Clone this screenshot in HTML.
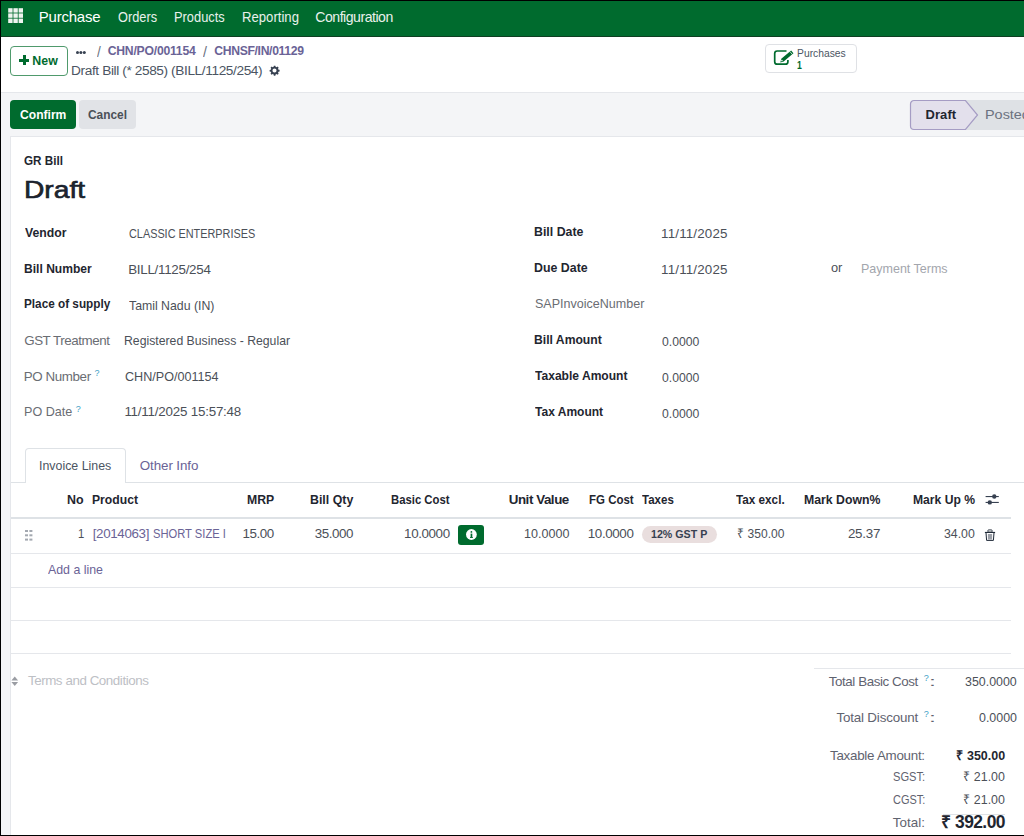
<!DOCTYPE html>
<html><head><meta charset="utf-8"><style>
html,body{margin:0;padding:0;width:1024px;height:836px;overflow:hidden;background:#fff;}
body{position:relative;font-family:"Liberation Sans",sans-serif;}
.a{position:absolute;}
.t{position:absolute;white-space:nowrap;line-height:20px;transform-origin:0 0;}
</style></head><body>
<!-- frame -->
<div class="a" style="left:0;top:0;width:1024px;height:836px;background:#f4f5f7;"></div>
<!-- navbar -->
<div class="a" style="left:0;top:0;width:1024px;height:36px;background:#006b2e;"></div>
<div class="a" style="left:0;top:36px;width:1024px;height:1px;background:#0e3f22;"></div>
<!-- grid icon -->
<svg class="a" style="left:0;top:0;" width="30" height="30" viewBox="0 0 30 30" fill="#eef4ef"><rect x="8.2" y="8.2" width="4.4" height="4.4"/><rect x="8.2" y="13.4" width="4.4" height="4.4"/><rect x="8.2" y="18.6" width="4.4" height="4.4"/><rect x="13.4" y="8.2" width="4.4" height="4.4"/><rect x="13.4" y="13.4" width="4.4" height="4.4"/><rect x="13.4" y="18.6" width="4.4" height="4.4"/><rect x="18.6" y="8.2" width="4.4" height="4.4"/><rect x="18.6" y="13.4" width="4.4" height="4.4"/><rect x="18.6" y="18.6" width="4.4" height="4.4"/></svg>
<!-- control panel -->
<div class="a" style="left:0;top:37px;width:1024px;height:55px;background:#ffffff;"></div>
<div class="a" style="left:0;top:92px;width:1024px;height:1px;background:#e5e7eb;"></div>
<!-- New button -->
<div class="a" style="left:10px;top:46px;width:56px;height:28px;border:1px solid #4f9a6c;border-radius:4px;background:#fff;"></div>
<div class="a" style="left:19px;top:58.5px;width:10px;height:3px;background:#006b2e;"></div>
<div class="a" style="left:22.5px;top:55px;width:3px;height:10px;background:#006b2e;"></div>
<!-- ellipsis -->
<div class="a" style="left:75.6px;top:51px;width:3px;height:3px;border-radius:50%;background:#374151;box-shadow:3.4px 0 0 #374151,6.8px 0 0 #374151;"></div>
<!-- gear -->
<svg class="a" style="left:268px;top:64px;" width="13" height="13" viewBox="0 0 24 24"><path fill="#374151" d="M12 8.2a3.8 3.8 0 1 0 0 7.6 3.8 3.8 0 0 0 0-7.6zm9.4 5.5-2.1.4a7.6 7.6 0 0 1-.8 1.9l1.2 1.8-2 2-1.8-1.2a7.6 7.6 0 0 1-1.9.8l-.4 2.1h-2.8l-.4-2.1a7.6 7.6 0 0 1-1.9-.8l-1.8 1.2-2-2 1.2-1.8a7.6 7.6 0 0 1-.8-1.9l-2.1-.4v-2.8l2.1-.4a7.6 7.6 0 0 1 .8-1.9L4.7 6.7l2-2 1.8 1.2a7.6 7.6 0 0 1 1.9-.8l.4-2.1h2.8l.4 2.1a7.6 7.6 0 0 1 1.9.8l1.8-1.2 2 2-1.2 1.8a7.6 7.6 0 0 1 .8 1.9l2.1.4z"/></svg>
<!-- smart button -->
<div class="a" style="left:765px;top:44px;width:90px;height:27px;border:1px solid #dfe1e5;border-radius:4px;background:#fff;"></div>
<svg class="a" style="left:766px;top:44px;" width="40" height="28" viewBox="766 44 40 28">
 <path d="M786.5 51H777.2A2.5 2.5 0 0 0 774.7 53.5V61.7A2.5 2.5 0 0 0 777.2 64.2H785.4A2.5 2.5 0 0 0 787.9 61.7V60" fill="none" stroke="#006b2e" stroke-width="1.7"/>
 <path d="M780.3 62.6L781.33 58.83L791.13 50.43L793.47 53.17L783.67 61.57Z" fill="#006b2e"/>
 <path d="M789.9 51.6L792.3 54.4" stroke="#fff" stroke-width="0.7"/>
 <circle cx="781.9" cy="60.6" r="0.8" fill="#fff"/>
</svg>
<!-- buttons -->
<div class="a" style="left:10px;top:100px;width:66px;height:29px;border-radius:4px;background:#006b2e;"></div>
<div class="a" style="left:79px;top:100px;width:57px;height:29px;border-radius:4px;background:#e1e3e7;"></div>
<!-- status bar -->
<div class="a" style="left:965px;top:100px;width:59px;height:30px;background:#dee1e5;"></div>
<svg class="a" style="left:909px;top:99px;" width="72" height="32" viewBox="0 0 72 32">
 <path d="M5 1.5H56.5L68.5 16L56.5 30.5H5A3.5 3.5 0 0 1 1.5 27V5A3.5 3.5 0 0 1 5 1.5Z" fill="#e3e0ec" stroke="#a59cc4" stroke-width="1.2"/>
</svg>
<!-- sheet -->
<div class="a" style="left:10px;top:136px;width:1014px;height:699px;background:#ffffff;border-left:1px solid #e5e7eb;border-top:1px solid #e5e7eb;"></div>
<!-- tabs -->
<div class="a" style="left:11px;top:482px;width:1013px;height:1px;background:#dee2e6;"></div>
<div class="a" style="left:25px;top:448px;width:99px;height:34px;border:1px solid #dee2e6;border-bottom:none;border-radius:4px 4px 0 0;background:#fff;"></div>
<!-- table lines -->
<div class="a" style="left:11px;top:517px;width:1000px;height:2px;background:#dee2e6;"></div>
<div class="a" style="left:11px;top:553px;width:1000px;height:1px;background:#e5e7eb;"></div>
<div class="a" style="left:11px;top:587px;width:1000px;height:1px;background:#e5e7eb;"></div>
<div class="a" style="left:11px;top:620px;width:1000px;height:1px;background:#e5e7eb;"></div>
<div class="a" style="left:11px;top:653px;width:1000px;height:1px;background:#e5e7eb;"></div>
<!-- settings icon -->
<svg class="a" style="left:978px;top:488px;" width="28" height="20" viewBox="978 488 28 20">
 <rect x="985.6" y="496" width="13.2" height="1.1" fill="#374151"/><rect x="985.6" y="501.9" width="13.2" height="1.1" fill="#374151"/>
 <circle cx="994.3" cy="496.5" r="2.2" fill="#374151"/><circle cx="989.8" cy="502.4" r="2.2" fill="#374151"/>
</svg>
<!-- drag handle -->
<div class="a" style="left:25px;top:529.5px;width:2.6px;height:2.6px;background:#a3a8b0;box-shadow:4.4px 0 0 #a3a8b0,0 4.3px 0 #a3a8b0,4.4px 4.3px 0 #a3a8b0,0 8.6px 0 #a3a8b0,4.4px 8.6px 0 #a3a8b0;"></div>
<!-- info button -->
<div class="a" style="left:458px;top:525px;width:26px;height:20px;border-radius:3px;background:#006b2e;"></div>
<svg class="a" style="left:465px;top:529px;" width="12" height="12" viewBox="0 0 12 12">
 <circle cx="6.4" cy="5.5" r="5.4" fill="#fff"/><rect x="5.6" y="4.6" width="1.7" height="4" fill="#006b2e"/><rect x="5.0" y="8" width="2.9" height="0.9" fill="#006b2e"/><circle cx="6.4" cy="2.9" r="0.9" fill="#006b2e"/>
</svg>
<!-- badge -->
<div class="a" style="left:641.5px;top:526px;width:75px;height:17px;border-radius:9px;background:#e9dede;"></div>
<!-- trash -->
<svg class="a" style="left:984px;top:529px;" width="12" height="13" viewBox="0 0 12 13">
 <rect x="3.8" y="0.9" width="4.4" height="2.2" rx="0.9" fill="none" stroke="#1f2937" stroke-width="0.9"/>
 <rect x="0.9" y="2.9" width="10.2" height="1.1" fill="#1f2937"/>
 <path d="M2 3.8L2.6 11.4H9.4L10 3.8" fill="none" stroke="#1f2937" stroke-width="1"/>
 <rect x="3.9" y="5" width="4.2" height="5.6" fill="#9ca0a8"/>
</svg>
<!-- sort icon -->
<svg class="a" style="left:11px;top:675.5px;" width="8" height="11" viewBox="0 0 8 11">
 <path d="M0.4 4.4L3.75 0.5L7.1 4.4z" fill="#9a9da3"/><path d="M0.4 6L3.75 9.9L7.1 6z" fill="#9a9da3"/>
</svg>
<!-- totals lines -->
<div class="a" style="left:814px;top:668px;width:210px;height:1px;background:#e5e7eb;"></div>
<div class="a" style="left:943px;top:814px;width:62px;height:1px;background:#dfe2e6;"></div>
<!-- superscripts -->
<div class="a" style="left:94.5px;top:367.7px;font-size:9px;line-height:10px;color:#3f9fc6;">?</div>
<div class="a" style="left:75.7px;top:403.6px;font-size:9px;line-height:10px;color:#3f9fc6;">?</div>
<div class="a" style="left:923.8px;top:673px;font-size:9px;line-height:10px;color:#3f9fc6;">?</div>
<div class="a" style="left:923.8px;top:709px;font-size:9px;line-height:10px;color:#3f9fc6;">?</div>
<!-- frame borders -->
<div class="a" style="left:0;top:0;width:1024px;height:1px;background:#000;"></div>
<div class="a" style="left:0;top:0;width:1px;height:836px;background:#000;"></div>
<div class="a" style="left:0;top:835px;width:1024px;height:1px;background:#000;"></div>
<div class="t" style="left:38.80px;top:6.90px;font-size:14.97px;font-weight:400;color:#ffffff;letter-spacing:-0.208px;">Purchase</div>
<div class="t" style="left:118.43px;top:6.90px;font-size:14.10px;font-weight:400;color:#e9f1ec;transform:scaleX(0.9062);">Orders</div>
<div class="t" style="left:174.27px;top:6.90px;font-size:14.10px;font-weight:400;color:#e9f1ec;transform:scaleX(0.9114);">Products</div>
<div class="t" style="left:241.65px;top:6.90px;font-size:14.10px;font-weight:400;color:#e9f1ec;transform:scaleX(0.9318);">Reporting</div>
<div class="t" style="left:315.30px;top:6.90px;font-size:14.10px;font-weight:400;color:#e9f1ec;letter-spacing:-0.488px;">Configuration</div>
<div class="t" style="left:32.20px;top:50.90px;font-size:12.35px;font-weight:700;color:#006b2e;letter-spacing:0.184px;">New</div>
<div class="t" style="left:96.80px;top:41.90px;font-size:15.41px;font-weight:400;color:#6b7280;transform:scaleX(0.8809);">/</div>
<div class="t" style="left:107.71px;top:41.30px;font-size:12.21px;font-weight:700;color:#6a6396;letter-spacing:-0.237px;">CHN/PO/001154</div>
<div class="t" style="left:203.00px;top:41.90px;font-size:15.41px;font-weight:400;color:#6b7280;transform:scaleX(0.9272);">/</div>
<div class="t" style="left:214.31px;top:41.30px;font-size:12.21px;font-weight:700;color:#6a6396;letter-spacing:-0.351px;">CHNSF/IN/01129</div>
<div class="t" style="left:71.11px;top:60.80px;font-size:13.66px;font-weight:400;color:#4b5563;letter-spacing:-0.388px;">Draft Bill (* 2585) (BILL/1125/254)</div>
<div class="t" style="left:796.77px;top:43.00px;font-size:11.63px;font-weight:400;color:#4b5563;transform:scaleX(0.8880);">Purchases</div>
<div class="t" style="left:797.48px;top:54.60px;font-size:11.34px;font-weight:700;color:#006b2e;transform:scaleX(0.7694);">1</div>
<div class="t" style="left:19.52px;top:104.60px;font-size:12.94px;font-weight:700;color:#ffffff;transform:scaleX(0.9353);">Confirm</div>
<div class="t" style="left:88.22px;top:104.60px;font-size:12.94px;font-weight:700;color:#4b5058;transform:scaleX(0.9190);">Cancel</div>
<div class="t" style="left:925.56px;top:104.60px;font-size:12.94px;font-weight:700;color:#1f2630;letter-spacing:0.087px;">Draft</div>
<div class="t" style="left:985.05px;top:104.60px;font-size:12.94px;font-weight:400;color:#6b7280;transform:scaleX(1.1138);">Posted</div>
<div class="t" style="left:24.33px;top:150.50px;font-size:13.23px;font-weight:700;color:#1f2630;transform:scaleX(0.8841);">GR Bill</div>
<div class="t" style="left:24.24px;top:179.70px;font-size:24.13px;font-weight:400;color:#1f2630;transform:scaleX(1.1689);-webkit-text-stroke:0.6px #111827;">Draft</div>
<div class="t" style="left:25.14px;top:222.60px;font-size:13.66px;font-weight:700;color:#1f2630;transform:scaleX(0.8973);">Vendor</div>
<div class="t" style="left:128.76px;top:224.40px;font-size:13.37px;font-weight:400;color:#4b5058;transform:scaleX(0.8131);">CLASSIC ENTERPRISES</div>
<div class="t" style="left:24.42px;top:258.90px;font-size:13.66px;font-weight:700;color:#1f2630;transform:scaleX(0.8837);">Bill Number</div>
<div class="t" style="left:128.23px;top:260.00px;font-size:13.37px;font-weight:400;color:#4b5058;letter-spacing:-0.276px;">BILL/1125/254</div>
<div class="t" style="left:24.44px;top:294.40px;font-size:13.66px;font-weight:700;color:#1f2630;transform:scaleX(0.8611);">Place of supply</div>
<div class="t" style="left:129.05px;top:295.50px;font-size:13.37px;font-weight:400;color:#4b5058;transform:scaleX(0.9207);">Tamil Nadu (IN)</div>
<div class="t" style="left:24.23px;top:330.90px;font-size:13.37px;font-weight:400;color:#6a6d73;letter-spacing:-0.448px;">GST Treatment</div>
<div class="t" style="left:124.42px;top:331.00px;font-size:13.37px;font-weight:400;color:#4b5058;transform:scaleX(0.9164);">Registered Business - Regular</div>
<div class="t" style="left:23.83px;top:366.90px;font-size:13.37px;font-weight:400;color:#6a6d73;letter-spacing:-0.410px;">PO Number</div>
<div class="t" style="left:124.77px;top:367.00px;font-size:13.37px;font-weight:400;color:#4b5058;transform:scaleX(0.9424);">CHN/PO/001154</div>
<div class="t" style="left:23.89px;top:402.30px;font-size:13.37px;font-weight:400;color:#6a6d73;transform:scaleX(0.9410);">PO Date</div>
<div class="t" style="left:124.40px;top:402.30px;font-size:13.37px;font-weight:400;color:#4b5058;letter-spacing:-0.207px;">11/11/2025 15:57:48</div>
<div class="t" style="left:534.40px;top:221.80px;font-size:13.66px;font-weight:700;color:#1f2630;transform:scaleX(0.9038);">Bill Date</div>
<div class="t" style="left:661.10px;top:223.90px;font-size:13.37px;font-weight:400;color:#4b5058;letter-spacing:0.163px;">11/11/2025</div>
<div class="t" style="left:534.39px;top:257.80px;font-size:13.66px;font-weight:700;color:#1f2630;transform:scaleX(0.9066);">Due Date</div>
<div class="t" style="left:661.10px;top:259.90px;font-size:13.37px;font-weight:400;color:#4b5058;letter-spacing:0.163px;">11/11/2025</div>
<div class="t" style="left:831.29px;top:258.00px;font-size:13.37px;font-weight:400;color:#4b5058;transform:scaleX(0.9583);">or</div>
<div class="t" style="left:860.60px;top:259.40px;font-size:13.37px;font-weight:400;color:#a3a6ad;transform:scaleX(0.9358);">Payment Terms</div>
<div class="t" style="left:534.64px;top:294.20px;font-size:13.37px;font-weight:400;color:#6a6d73;transform:scaleX(0.9376);">SAPInvoiceNumber</div>
<div class="t" style="left:534.41px;top:330.10px;font-size:13.66px;font-weight:700;color:#1f2630;transform:scaleX(0.8905);">Bill Amount</div>
<div class="t" style="left:661.87px;top:331.50px;font-size:13.37px;font-weight:400;color:#4b5058;transform:scaleX(0.9135);">0.0000</div>
<div class="t" style="left:535.08px;top:366.30px;font-size:13.66px;font-weight:700;color:#1f2630;transform:scaleX(0.8834);">Taxable Amount</div>
<div class="t" style="left:661.87px;top:367.60px;font-size:13.37px;font-weight:400;color:#4b5058;transform:scaleX(0.9135);">0.0000</div>
<div class="t" style="left:535.08px;top:402.20px;font-size:13.66px;font-weight:700;color:#1f2630;transform:scaleX(0.8800);">Tax Amount</div>
<div class="t" style="left:661.87px;top:403.60px;font-size:13.37px;font-weight:400;color:#4b5058;transform:scaleX(0.9135);">0.0000</div>
<div class="t" style="left:38.78px;top:455.70px;font-size:13.37px;font-weight:400;color:#4b5563;transform:scaleX(0.9268);">Invoice Lines</div>
<div class="t" style="left:139.80px;top:455.70px;font-size:13.37px;font-weight:400;color:#6a6396;letter-spacing:-0.094px;">Other Info</div>
<div class="t" style="left:67.39px;top:489.50px;font-size:13.37px;font-weight:700;color:#1f2630;transform:scaleX(0.9310);">No</div>
<div class="t" style="left:92.41px;top:489.50px;font-size:13.37px;font-weight:700;color:#1f2630;transform:scaleX(0.9110);">Product</div>
<div class="t" style="left:247.00px;top:489.50px;font-size:13.37px;font-weight:700;color:#1f2630;transform:scaleX(0.9159);">MRP</div>
<div class="t" style="left:309.70px;top:489.50px;font-size:13.37px;font-weight:700;color:#1f2630;transform:scaleX(0.9261);">Bill Qty</div>
<div class="t" style="left:391.16px;top:489.50px;font-size:13.37px;font-weight:700;color:#1f2630;transform:scaleX(0.8476);">Basic Cost</div>
<div class="t" style="left:508.70px;top:489.50px;font-size:13.37px;font-weight:700;color:#1f2630;letter-spacing:-0.444px;">Unit Value</div>
<div class="t" style="left:588.85px;top:489.50px;font-size:13.37px;font-weight:700;color:#1f2630;transform:scaleX(0.8594);">FG Cost</div>
<div class="t" style="left:642.18px;top:489.50px;font-size:13.37px;font-weight:700;color:#1f2630;transform:scaleX(0.8629);">Taxes</div>
<div class="t" style="left:735.88px;top:489.50px;font-size:13.37px;font-weight:700;color:#1f2630;transform:scaleX(0.8771);">Tax excl.</div>
<div class="t" style="left:803.70px;top:489.50px;font-size:13.37px;font-weight:700;color:#1f2630;transform:scaleX(0.9187);">Mark Down%</div>
<div class="t" style="left:912.61px;top:489.50px;font-size:13.37px;font-weight:700;color:#1f2630;transform:scaleX(0.9085);">Mark Up %</div>
<div class="t" style="left:77.66px;top:524.10px;font-size:13.37px;font-weight:400;color:#4b5058;transform:scaleX(0.8424);">1</div>
<div class="t" style="left:92.66px;top:524.10px;font-size:13.37px;font-weight:400;color:#6a6396;letter-spacing:-0.335px;">[2014063]</div>
<div class="t" style="left:152.60px;top:524.10px;font-size:13.37px;font-weight:400;color:#6a6396;transform:scaleX(0.8370);">SHORT SIZE I</div>
<div class="t" style="left:242.40px;top:524.10px;font-size:13.37px;font-weight:400;color:#4b5058;letter-spacing:-0.385px;">15.00</div>
<div class="t" style="left:314.63px;top:524.10px;font-size:13.37px;font-weight:400;color:#4b5058;letter-spacing:-0.411px;">35.000</div>
<div class="t" style="left:404.10px;top:524.10px;font-size:13.37px;font-weight:400;color:#4b5058;letter-spacing:-0.387px;">10.0000</div>
<div class="t" style="left:524.06px;top:524.10px;font-size:13.37px;font-weight:400;color:#4b5058;transform:scaleX(0.9396);">10.0000</div>
<div class="t" style="left:587.80px;top:524.10px;font-size:13.37px;font-weight:400;color:#4b5058;letter-spacing:-0.371px;">10.0000</div>
<div class="t" style="left:651.36px;top:524.00px;font-size:11.34px;font-weight:700;color:#374151;transform:scaleX(0.9406);">12% GST P</div>
<div class="t" style="left:736.79px;top:524.10px;font-size:13.37px;font-weight:400;color:#4b5058;transform:scaleX(0.9014);">₹ 350.00</div>
<div class="t" style="left:847.93px;top:524.10px;font-size:13.37px;font-weight:400;color:#4b5058;letter-spacing:-0.236px;">25.37</div>
<div class="t" style="left:944.07px;top:523.60px;font-size:13.37px;font-weight:400;color:#4b5058;transform:scaleX(0.9209);">34.00</div>
<div class="t" style="left:47.70px;top:559.90px;font-size:13.37px;font-weight:400;color:#6a6396;transform:scaleX(0.9244);">Add a line</div>
<div class="t" style="left:27.93px;top:671.10px;font-size:13.37px;font-weight:400;color:#bdc0c5;letter-spacing:-0.435px;">Terms and Conditions</div>
<div class="t" style="left:828.83px;top:672.10px;font-size:13.37px;font-weight:400;color:#5f636f;letter-spacing:-0.430px;">Total Basic Cost</div>
<div class="t" style="left:928.75px;top:672.10px;font-size:13.37px;font-weight:400;color:#5f636f;transform:scaleX(1.8696);">:</div>
<div class="t" style="left:964.77px;top:672.10px;font-size:13.37px;font-weight:400;color:#4b5058;transform:scaleX(0.9291);">350.0000</div>
<div class="t" style="left:836.53px;top:708.20px;font-size:13.37px;font-weight:400;color:#5f636f;letter-spacing:-0.179px;">Total Discount</div>
<div class="t" style="left:928.75px;top:708.20px;font-size:13.37px;font-weight:400;color:#5f636f;transform:scaleX(1.8696);">:</div>
<div class="t" style="left:978.57px;top:708.20px;font-size:13.37px;font-weight:400;color:#4b5058;transform:scaleX(0.9285);">0.0000</div>
<div class="t" style="left:830.03px;top:745.70px;font-size:13.37px;font-weight:400;color:#5f636f;letter-spacing:-0.266px;">Taxable Amount:</div>
<div class="t" style="left:956.05px;top:746.00px;font-size:13.37px;font-weight:700;color:#1f2630;transform:scaleX(0.9359);">₹ 350.00</div>
<div class="t" style="left:892.70px;top:767.40px;font-size:13.37px;font-weight:400;color:#5f636f;transform:scaleX(0.8341);">SGST:</div>
<div class="t" style="left:963.36px;top:767.40px;font-size:13.37px;font-weight:400;color:#4b5058;transform:scaleX(0.9274);">₹ 21.00</div>
<div class="t" style="left:892.65px;top:789.50px;font-size:13.37px;font-weight:400;color:#5f636f;transform:scaleX(0.8192);">CGST:</div>
<div class="t" style="left:963.36px;top:789.50px;font-size:13.37px;font-weight:400;color:#4b5058;transform:scaleX(0.9274);">₹ 21.00</div>
<div class="t" style="left:892.73px;top:813.00px;font-size:13.37px;font-weight:400;color:#5f636f;letter-spacing:0.087px;">Total:</div>
<div class="t" style="left:941.36px;top:811.60px;font-size:17.44px;font-weight:700;color:#1f2630;letter-spacing:-0.586px;">₹ 392.00</div>
</body></html>
